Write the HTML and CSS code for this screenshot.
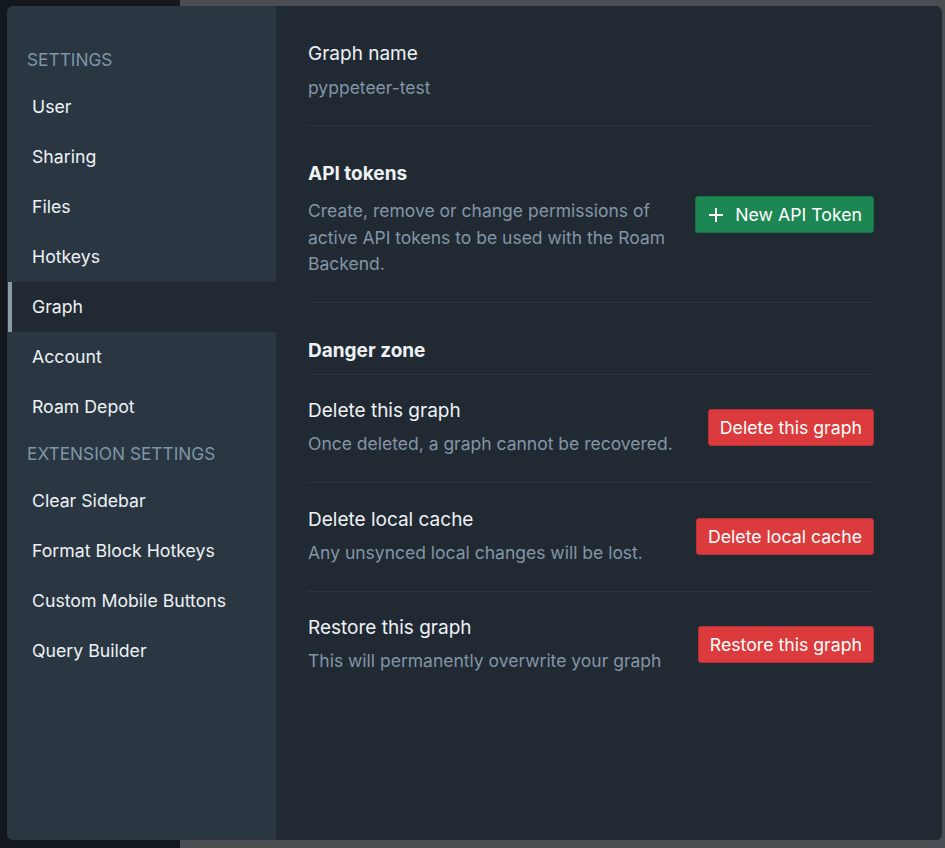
FILE: index.html
```html
<!DOCTYPE html>
<html>
<head>
<meta charset="utf-8">
<link rel="stylesheet" href="styles.css">
</head>
<body>
<div class="backdrop">
  <div class="dialog">
    <nav class="sidebar">
      <div class="nav-heading">Settings</div>
      <div class="nav-item">User</div>
      <div class="nav-item">Sharing</div>
      <div class="nav-item">Files</div>
      <div class="nav-item">Hotkeys</div>
      <div class="nav-item active">Graph</div>
      <div class="nav-item">Account</div>
      <div class="nav-item">Roam Depot</div>
      <div class="nav-heading ext">Extension Settings</div>
      <div class="nav-item">Clear Sidebar</div>
      <div class="nav-item">Format Block Hotkeys</div>
      <div class="nav-item">Custom Mobile Buttons</div>
      <div class="nav-item">Query Builder</div>
    </nav>
    <main class="content">
      <section class="section first">
        <div class="title">Graph name</div>
        <div class="desc">pyppeteer-test</div>
      </section>
      <section class="section">
        <div class="title bold">API tokens</div>
        <div class="api-row">
          <div class="desc api-desc">Create, remove or change permissions of active API tokens to be used with the Roam Backend.</div>
          <button class="btn btn-green">
            <svg class="plus" width="16" height="16" viewBox="0 0 16 16"><path d="M8 1v14M1 8h14" stroke="#ffffff" stroke-width="2" fill="none"/></svg>
            New API Token
          </button>
        </div>
      </section>
      <section class="section danger-head">
        <div class="title bold">Danger zone</div>
      </section>
      <section class="row">
        <div>
          <div class="title">Delete this graph</div>
          <div class="desc">Once deleted, a graph cannot be recovered.</div>
        </div>
        <button class="btn btn-red">Delete this graph</button>
      </section>
      <section class="row">
        <div>
          <div class="title">Delete local cache</div>
          <div class="desc">Any unsynced local changes will be lost.</div>
        </div>
        <button class="btn btn-red">Delete local cache</button>
      </section>
      <section class="row last">
        <div>
          <div class="title">Restore this graph</div>
          <div class="desc">This will permanently overwrite your graph</div>
        </div>
        <button class="btn btn-red">Restore this graph</button>
      </section>
    </main>
  </div>
</div>
</body>
</html>
```
FILE: styles.css
```css
* { box-sizing: border-box; }
html, body { margin: 0; padding: 0; }
body {
  width: 945px;
  height: 848px;
  overflow: hidden;
  font-family: Inter, "Noto Sans", sans-serif;
  font-size: 17.5px;
  background: linear-gradient(to right, #12181d 0, #12181d 180px, #4a4e53 180px, #4a4e53 100%);
}
.backdrop {
  padding: 6px 3px 8px 7px;
}
.dialog {
  display: flex;
  height: 834px;
  border-radius: 6px;
  overflow: hidden;
  background: #212a33;
}
.sidebar {
  width: 269px;
  flex-shrink: 0;
  background: #2a3743;
  padding-top: 32px;
}
.nav-heading {
  height: 44px;
  line-height: 44px;
  padding-left: 20px;
  color: #7f95a8;
  font-size: 17.3px;
  text-transform: uppercase;
}
.nav-item {
  height: 50px;
  line-height: 50px;
  padding-left: 21px;
  color: #eef2f5;
  font-size: 17.7px;
  border-left: 4px solid transparent;
}
.nav-item.active {
  background: #212a33;
  border-left: 4px solid #8a9ba8;
  margin-left: 1px;
  padding-left: 20px;
}
.content {
  flex: 1;
  padding: 0 68px 0 32px;
}
.section {
  padding-top: 35px;
  padding-bottom: 24px;
  border-bottom: 1px solid #2b3641;
}
.title {
  color: #eef2f5;
  font-size: 19px;
  line-height: 26px;
}
.title.bold { font-weight: 700; }
.desc {
  color: #8395a7;
  line-height: 26px;
  margin-top: 8px;
}
.api-row {
  display: flex;
  justify-content: space-between;
  align-items: flex-start;
  margin-top: 3px;
}
.api-desc { width: 372px; line-height: 26.5px; }
.btn {
  font-family: inherit;
  font-size: 17.7px;
  height: 37px;
  padding: 0 11px;
  border-radius: 3px;
  color: #ffffff;
  display: inline-flex;
  align-items: center;
  cursor: pointer;
}
.btn-green {
  background: #1d8753;
  border: 1px solid #1b6e45;
  margin-top: 6px;
  padding: 0 11px 0 12px;
}
.plus { margin-right: 11px; }
.btn-red {
  background: #dc3b3d;
  border: 1px solid #b8303a;
  flex-shrink: 0;
}
.danger-head {
  padding-bottom: 10px;
}
.row {
  display: flex;
  justify-content: space-between;
  align-items: center;
  padding: 23.5px 0 25px;
  border-bottom: 1px solid #2b3641;
}
.row .desc { margin-top: 7px; }
.row.last { border-bottom: none; }
```
